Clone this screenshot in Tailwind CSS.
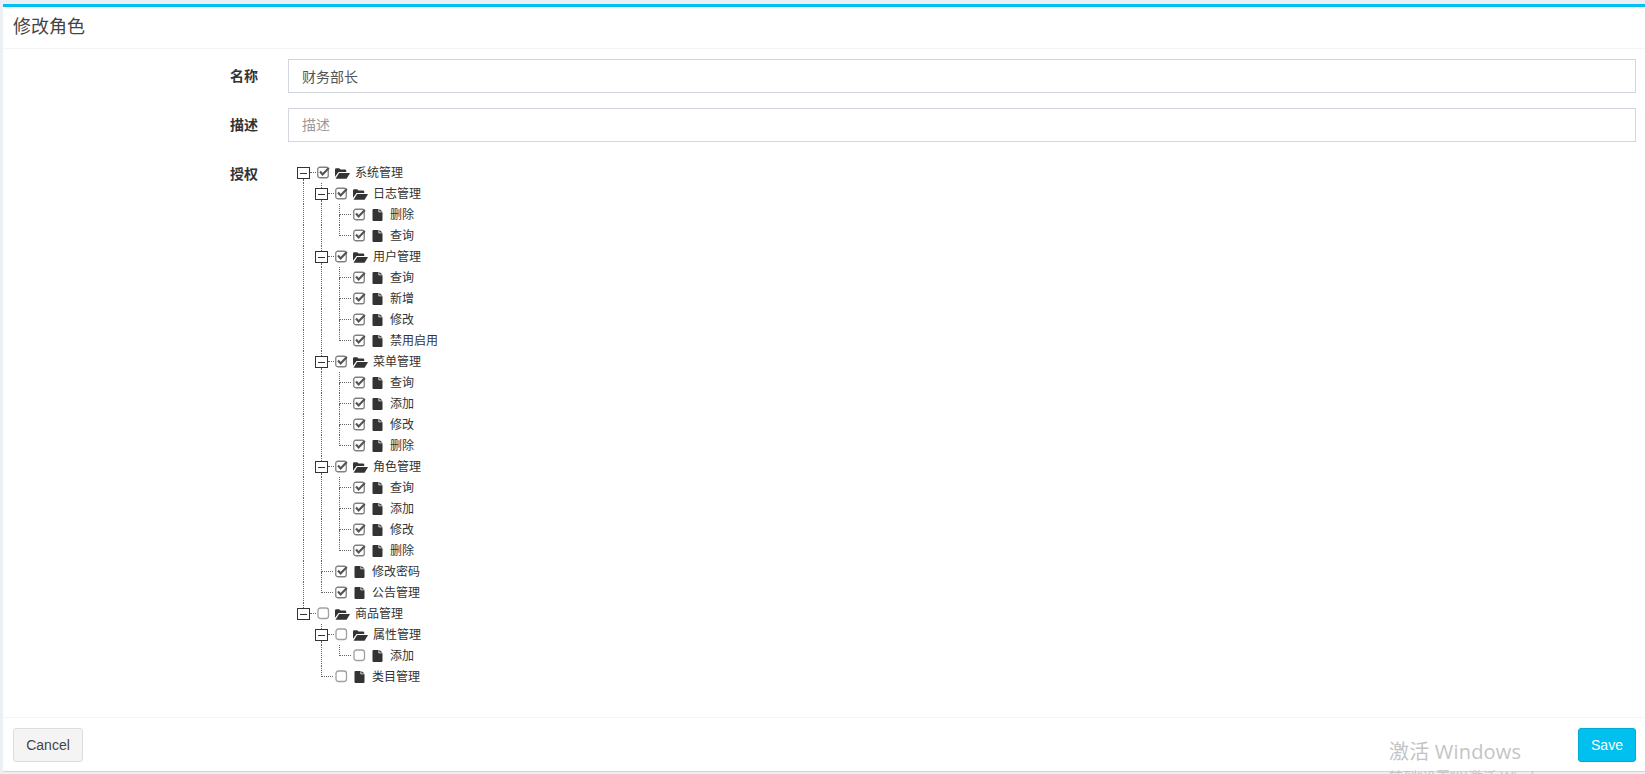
<!DOCTYPE html>
<html lang="zh-CN">
<head>
  <meta charset="UTF-8">
  <meta name="viewport" content="width=device-width, initial-scale=1.0">
  <title>修改角色</title>
  <script src="https://cdn.jsdelivr.net/npm/@tailwindcss/browser@4"></script>
</head>
<body class="bg-[#ecf0f5] h-screen overflow-hidden relative font-['Liberation_Sans','Noto_Sans_CJK_SC',sans-serif] text-[14px] text-[#333]">

  <div class="ml-[3px] mt-[4px] h-[768px] bg-white border-t-[3px] border-t-[#00c0ef] border-b border-b-[#d2d6de] flex flex-col">

    <!-- Header -->
    <div class="h-[42px] shrink-0 border-b border-[#f4f4f4] pl-[10px] flex items-center">
      <h3 class="text-[18px] text-[#444]">修改角色</h3>
    </div>

    <!-- Form -->
    <form class="flex-1 pt-[10px] pr-[9px]">
      <div class="flex items-center mb-[15px]">
        <label class="w-[255px] text-right font-bold">名称</label>
        <input type="text" value="财务部长" class="ml-[30px] flex-1 h-[34px] border border-[#d2d6de] px-[13px] text-[#555] outline-none">
      </div>
      <div class="flex items-center mb-[20px]">
        <label class="w-[255px] text-right font-bold">描述</label>
        <input type="text" placeholder="描述" class="ml-[30px] flex-1 h-[34px] border border-[#d2d6de] px-[13px] text-[#555] placeholder:text-[#999] outline-none">
      </div>
      <div class="flex">
        <label class="w-[255px] text-right font-bold pt-[2px]">授权</label>
        <div id="tree" class="ml-[37px] text-[12px] text-[#333]"></div>
      </div>
    </form>

    <!-- Footer -->
    <div class="h-[54px] shrink-0 border-t border-[#f4f4f4] pt-[10px] pl-[10px] pr-[9px] flex justify-between items-start">
      <button type="button" class="w-[70px] h-[34px] bg-[#f4f4f4] border border-[#ddd] rounded-[3px] text-[#444]">Cancel</button>
      <button type="button" class="w-[58px] h-[34px] bg-[#00c0ef] border border-[#00acd6] rounded-[3px] text-white">Save</button>
    </div>
  </div>

  <!-- Windows activation watermark -->
  <div class="absolute left-[1389px] top-[738px] text-[#c4c4c4] pointer-events-none whitespace-nowrap font-['Open_Sans','Noto_Sans_CJK_SC',sans-serif]">
    <div class="text-[20px] leading-[28px] tracking-[0.2px]">激活 Windows</div>
    <div class="text-[14px] leading-[20px] mt-[1px]">转到“设置”以激活 Windows。</div>
  </div>

  <script>
    const treeData = [
      { name: '系统管理', on: true, children: [
        { name: '日志管理', on: true, children: [{ name: '删除', on: true }, { name: '查询', on: true }] },
        { name: '用户管理', on: true, children: [{ name: '查询', on: true }, { name: '新增', on: true }, { name: '修改', on: true }, { name: '禁用启用', on: true }] },
        { name: '菜单管理', on: true, children: [{ name: '查询', on: true }, { name: '添加', on: true }, { name: '修改', on: true }, { name: '删除', on: true }] },
        { name: '角色管理', on: true, children: [{ name: '查询', on: true }, { name: '添加', on: true }, { name: '修改', on: true }, { name: '删除', on: true }] },
        { name: '修改密码', on: true },
        { name: '公告管理', on: true }
      ] },
      { name: '商品管理', on: false, children: [
        { name: '属性管理', on: false, children: [{ name: '添加', on: false }] },
        { name: '类目管理', on: false }
      ] }
    ];

    const vLine = '<span class="absolute left-[8px] top-0 bottom-0 border-l border-dotted border-[#666]"></span>';
    const vTop = '<span class="absolute left-[8px] top-0 h-[5px] border-l border-dotted border-[#666]"></span>';
    const vBottom = '<span class="absolute left-[8px] top-[17px] bottom-0 border-l border-dotted border-[#666]"></span>';
    const vHalf = '<span class="absolute left-[8px] top-0 h-[11px] border-l border-dotted border-[#666]"></span>';
    const vRest = '<span class="absolute left-[8px] top-[11px] bottom-0 border-l border-dotted border-[#666]"></span>';
    const hLeaf = '<span class="absolute left-[9px] top-[10px] w-[11px] border-t border-dotted border-[#666]"></span>';
    const hStub = '<span class="absolute left-[15px] top-[10px] w-[6px] border-t border-dotted border-[#666]"></span>';
    const box = '<span class="absolute left-[2px] top-[5px] w-[13px] h-[12px] border border-[#333] bg-white flex items-center justify-center"><span class="w-[7px] h-px bg-[#333]"></span></span>';

    const checked = '<svg width="13" height="13" viewBox="0 0 13 13" class="shrink-0"><rect x="0.75" y="1.25" width="10.5" height="10.5" rx="2" fill="none" stroke="#808080" stroke-width="1.3"/><path d="M3 5.6 5.6 8.5 11.8 2" fill="none" stroke="#555" stroke-width="2.2"/></svg>';
    const unchecked = '<svg width="13" height="13" viewBox="0 0 13 13" class="shrink-0"><rect x="1" y="1" width="10.5" height="10.5" rx="2.5" fill="none" stroke="#a0a0a0" stroke-width="1.3"/></svg>';
    const folder = '<svg width="15" height="12" viewBox="0 0 16 12" class="ml-[5px] mr-[5px] shrink-0 fill-[#333]"><path d="M0 2.2A1.4 1.4 0 0 1 1.4.8h3L6 2.3h4.6A1.4 1.4 0 0 1 12 3.7V5H3.8L0 10z"/><path d="M4.4 6H16l-3.6 6H.6z"/></svg>';
    const file = '<svg width="11" height="12" viewBox="0 0 10 12" class="ml-[6px] mr-[7px] shrink-0 fill-[#333]"><path d="M0 1a1 1 0 0 1 1-1h5v3.2h4V11a1 1 0 0 1-1 1H1a1 1 0 0 1-1-1z"/><path d="M6.8 0 10 2.6H6.8z"/></svg>';

    function renderRows(nodes, guides, isRoot) {
      let html = '';
      nodes.forEach((node, i) => {
        const hasNext = i < nodes.length - 1;
        const isParent = !!node.children;
        let own = '';
        if (isParent) {
          if (!(isRoot && i === 0)) own += vTop;
          if (hasNext) own += vBottom;
          own += hStub + box;
        } else {
          own += vHalf + hLeaf;
          if (hasNext) own += vRest;
        }
        const cells = guides.map(g => `<span class="relative w-[18px] h-[21px] shrink-0">${g ? vLine : ''}</span>`).join('');
        html += `<div class="flex items-center h-[21px] whitespace-nowrap">${cells}
          <span class="relative w-[18px] h-[21px] shrink-0">${own}</span>
          <span class="ml-[4px] flex items-center">${node.on ? checked : unchecked}${isParent ? folder : file}<span>${node.name}</span></span>
        </div>`;
        if (isParent) html += renderRows(node.children, guides.concat(hasNext), false);
      });
      return html;
    }

    document.getElementById('tree').innerHTML = renderRows(treeData, [], true);
  </script>
</body>
</html>
